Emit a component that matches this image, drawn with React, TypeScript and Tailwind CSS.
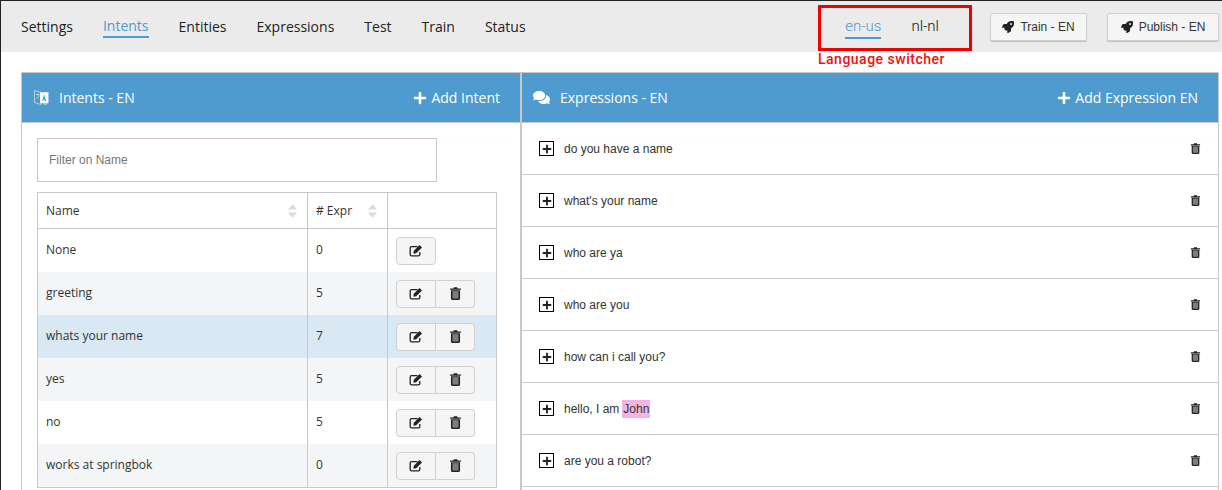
import React from "react";
import { FaComments, FaPlus, FaRocket } from "react-icons/fa";

const navItems = ["Settings", "Intents", "Entities", "Expressions", "Test", "Train", "Status"];

const intents = [
  { name: "None", count: 0, bg: "bg-white", canDelete: false },
  { name: "greeting", count: 5, bg: "bg-[#f4f5f7]", canDelete: true },
  { name: "whats your name", count: 7, bg: "bg-[#d9e8f3]", canDelete: true },
  { name: "yes", count: 5, bg: "bg-[#f4f5f7]", canDelete: true },
  { name: "no", count: 5, bg: "bg-white", canDelete: true },
  { name: "works at springbok", count: 0, bg: "bg-[#f4f5f7]", canDelete: true },
];

const expressions = [
  "do you have a name",
  "what's your name",
  "who are ya",
  "who are you",
  "how can i call you?",
  "hello, I am",
  "are you a robot?",
];

const TrashIcon = ({ size = 13 }: { size?: number }) => (
  <svg width={size} height={size} viewBox="0 0 12 12">
    <path d="M4 1.400 4.500.3h3l.5 1.100h3v1.200H1V1.400z" fill="#222" />
    <path d="M1.800 3h8.400v7.700c0 .8-.5 1.200-1.100 1.200H2.900c-.6 0-1.100-.4-1.100-1.200z" fill="#222" />
    <rect x="3.200" y="3.800" width="5.600" height="6.900" fill="#7d7d7d" />
  </svg>
);

const EditIcon = () => (
  <svg width="14" height="13" viewBox="0 0 14 13">
    <path d="M8.500 2.600H2.600c-.8 0-1.400.6-1.400 1.400v6.400c0 .8.600 1.400 1.400 1.400h6.800c.8 0 1.400-.6 1.400-1.400V8" fill="none" stroke="#222" strokeWidth="1.300" />
    <path d="M4.800 6.800 10.600 1l2.400 2.400-5.800 5.800-2.800.5z" fill="#222" />
  </svg>
);

const LanguageIcon = () => (
  <svg width="17" height="17" viewBox="0 0 17 17">
    <path d="M1.500 1.500 8 3.500v12l-6.500-2z" fill="none" stroke="#ffffff" strokeOpacity="0.55" strokeWidth="1" />
    <path d="M3.200 5.500h3M4.700 4.500v1M3.600 9.500c1.400-.8 2.200-2.200 2.400-4" fill="none" stroke="#ffffff" strokeOpacity="0.7" strokeWidth="0.8" />
    <path d="M7 3.200h8.500v11H7z" fill="#ffffff" fillOpacity="0.95" />
    <path d="M9.300 12 11.200 5.600 13.200 12h-1.200l-.3-1.200h-1.100L10.300 12z" fill="#4f9ace" />
    <path d="M10 14.300h4.500L12.500 16.500z" fill="#ffffff" fillOpacity="0.55" />
  </svg>
);

const SortArrows = () => (
  <svg width="9" height="14" viewBox="0 0 9 14">
    <path d="M4.500 0 9 5.500H0z" fill="#dcdcdc" />
    <path d="M4.500 14 0 8.500h9z" fill="#dcdcdc" />
  </svg>
);

const ActionButton = ({ children, className }: { children: React.ReactNode; className: string }) => (
  <div className={`h-[28px] flex items-center justify-center bg-[#f5f5f5] border border-[#d0d0d0] ${className}`}>
    {children}
  </div>
);

const TopButton = ({ label, className }: { label: string; className: string }) => (
  <div className={`h-[28px] flex items-center justify-center gap-[6px] bg-[#f5f5f5] border border-[#cfcfcf] rounded-[2px] shadow-[0_1px_1px_rgba(0,0,0,0.18)] text-[12px] text-[#333] font-['Liberation_Sans',sans-serif] ${className}`}>
    <FaRocket size={12} className="text-[#222]" />
    <span>{label}</span>
  </div>
);

const PanelHeader = ({ icon, title, action, iconGap }: { icon: React.ReactNode; title: string; action: string; iconGap: string }) => (
  <div className="h-[49px] bg-[#4f9ace] flex items-center justify-between text-white text-[14px] font-medium pl-[11px] pr-[20px]">
    <div className={`flex items-center ${iconGap}`}>
      {icon}
      <span>{title}</span>
    </div>
    <div className="flex items-center gap-[4px]">
      <FaPlus size={14} />
      <span>{action}</span>
    </div>
  </div>
);

const App = () => {
  return (
    <div className="w-[1222px] h-[490px] overflow-hidden bg-white border-t border-l border-[#222] font-['Open_Sans',sans-serif] relative">
      <div className="h-[51px] bg-[#ebebeb] flex items-center pl-[20px] pr-[3px]">
        <div className="flex gap-[30px] text-[14px] text-[#222]">
          {navItems.map((item) => (
            <div
              key={item}
              className={item === "Intents" ? "text-[#4f9ace] border-b-2 border-[#4f9ace] h-[22px] leading-[20px]" : "h-[22px] leading-[22px]"}
            >
              {item}
            </div>
          ))}
        </div>
        <div className="ml-auto flex items-center font-['Roboto',sans-serif]">
          <div className="flex items-center gap-[30px] text-[15px] font-light text-[#111] mr-[51px]">
            <div className="text-[#4f9ace] border-b-2 border-[#4f9ace] h-[24px] leading-[22px]">en-us</div>
            <div className="h-[24px] leading-[22px]">nl-nl</div>
          </div>
          <TopButton label="Train - EN" className="w-[97px] mr-[20px]" />
          <TopButton label="Publish - EN" className="w-[112px]" />
        </div>
      </div>

      {/* annotation over the screenshot */}
      <div className="absolute left-[817px] top-[4px] w-[154px] h-[46px] border-[3px] border-[#f00000]" />
      <div className="absolute left-[817px] top-[49px] text-[14px] leading-[18px] font-medium tracking-[0.5px] text-[#ee1111] font-['Roboto',sans-serif]">
        Language switcher
      </div>

      <div className="flex pl-[20px] pt-[20px] pr-[2px]">
        <div className="w-[500px] h-[500px] border border-[#c8c8c8] shrink-0 flex flex-col">
          <PanelHeader icon={<LanguageIcon />} title="Intents - EN" action="Add Intent" iconGap="gap-[9px]" />
          <div className="border-t border-[#c8c8c8] pl-[15px] pr-[23px] pt-[15px]">
            <div className="w-[400px] h-[44px] border border-[#c8c8c8] flex items-center pl-[11px] text-[12px] text-[#777] font-['Liberation_Sans',sans-serif]">
              Filter on Name
            </div>
            <div className="mt-[10px] w-[460px] border border-[#c8c8c8] text-[12px] text-[#333]">
              <div className="grid grid-cols-[269px_80px_1fr] h-[36px] border-b border-[#c8c8c8]">
                <div className="flex items-center justify-between pl-[8px] pr-[10px]">
                  Name <SortArrows />
                </div>
                <div className="flex items-center justify-between pl-[8px] pr-[10px] border-l border-[#c8c8c8]">
                  # Expr <SortArrows />
                </div>
                <div className="border-l border-[#c8c8c8]" />
              </div>
              {intents.map((intent) => (
                <div key={intent.name} className={`grid grid-cols-[269px_80px_1fr] h-[43px] ${intent.bg}`}>
                  <div className="flex items-center pl-[8px] pb-[2px]">{intent.name}</div>
                  <div className="flex items-center pl-[8px] pb-[2px] border-l border-[#c8c8c8]">{intent.count}</div>
                  <div className="flex items-center pl-[8px] border-l border-[#c8c8c8]">
                    <ActionButton className={intent.canDelete ? "w-[40px] rounded-l-[4px]" : "w-[40px] rounded-[4px]"}>
                      <EditIcon />
                    </ActionButton>
                    {intent.canDelete && (
                      <ActionButton className="w-[39px] rounded-r-[4px] border-l-0">
                        <TrashIcon />
                      </ActionButton>
                    )}
                  </div>
                </div>
              ))}
            </div>
          </div>
        </div>

        <div className="w-[698px] h-[500px] border border-[#c8c8c8] shrink-0">
          <PanelHeader icon={<FaComments size={17} />} title="Expressions - EN" action="Add Expression EN" iconGap="gap-[10px]" />
          <div className="border-t border-[#c8c8c8] font-['Liberation_Sans',sans-serif] text-[12px] text-[#333]">
            {expressions.map((text) => (
              <div key={text} className="h-[52px] border-b border-[#c8c8c8] flex items-center pl-[17px] pr-[17px]">
                <div className="w-[15px] h-[15px] border-[1.5px] border-black flex items-center justify-center mr-[10px]">
                  <FaPlus size={10} className="text-[#222]" />
                </div>
                <span>{text}</span>
                {text === "hello, I am" && <span className="ml-[3px] px-[1px] bg-[#f5b3e3]">John</span>}
                <div className="ml-auto">
                  <TrashIcon size={11} />
                </div>
              </div>
            ))}
          </div>
        </div>
      </div>
    </div>
  );
};

export default App;
